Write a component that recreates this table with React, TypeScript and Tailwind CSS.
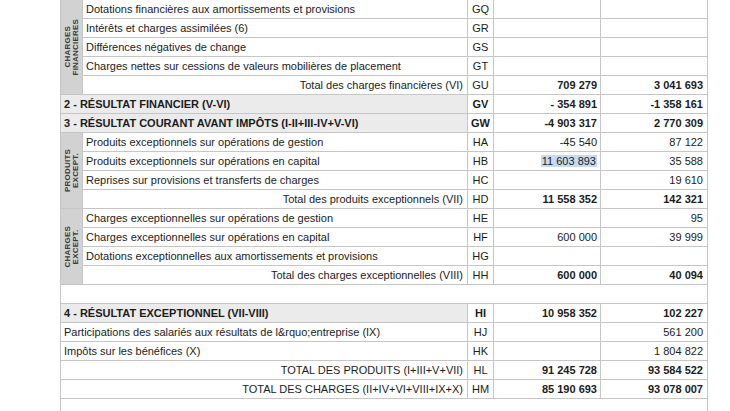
type Row =
  | { kind: "line"; label: string; code: string; v1?: string; v2?: string; total?: boolean; sel?: boolean }
  | { kind: "head"; label: string; code: string; v1?: string; v2?: string }
  | { kind: "plain"; label: string; code: string; v1?: string; v2?: string; total?: boolean };

type Group = { title: [string, string]; rows: Row[] } | { rows: Row[]; title?: undefined };

const groups: Group[] = [
  {
    title: ["CHARGES", "FINANCIERES"],
    rows: [
      { kind: "line", label: "Dotations financières aux amortissements et provisions", code: "GQ" },
      { kind: "line", label: "Intérêts et charges assimilées (6)", code: "GR" },
      { kind: "line", label: "Différences négatives de change", code: "GS" },
      { kind: "line", label: "Charges nettes sur cessions de valeurs mobilières de placement", code: "GT" },
      { kind: "line", label: "Total des charges financières (VI)", code: "GU", v1: "709 279", v2: "3 041 693", total: true },
    ],
  },
  {
    rows: [
      { kind: "head", label: "2 - RÉSULTAT FINANCIER (V-VI)", code: "GV", v1: "- 354 891", v2: "-1 358 161" },
      { kind: "head", label: "3 - RÉSULTAT COURANT AVANT IMPÔTS (I-II+III-IV+V-VI)", code: "GW", v1: "-4 903 317", v2: "2 770 309" },
    ],
  },
  {
    title: ["PRODUITS", "EXCEPT."],
    rows: [
      { kind: "line", label: "Produits exceptionnels sur opérations de gestion", code: "HA", v1: "-45 540", v2: "87 122" },
      { kind: "line", label: "Produits exceptionnels sur opérations en capital", code: "HB", v1: "11 603 893", v2: "35 588", sel: true },
      { kind: "line", label: "Reprises sur provisions et transferts de charges", code: "HC", v2: "19 610" },
      { kind: "line", label: "Total des produits exceptionnels (VII)", code: "HD", v1: "11 558 352", v2: "142 321", total: true },
    ],
  },
  {
    title: ["CHARGES", "EXCEPT."],
    rows: [
      { kind: "line", label: "Charges exceptionnelles sur opérations de gestion", code: "HE", v2: "95" },
      { kind: "line", label: "Charges exceptionnelles sur opérations en capital", code: "HF", v1: "600 000", v2: "39 999" },
      { kind: "line", label: "Dotations exceptionnelles aux amortissements et provisions", code: "HG" },
      { kind: "line", label: "Total des charges exceptionnelles (VIII)", code: "HH", v1: "600 000", v2: "40 094", total: true },
    ],
  },
];

const tail: Row[] = [
  { kind: "head", label: "4 - RÉSULTAT EXCEPTIONNEL (VII-VIII)", code: "HI", v1: "10 958 352", v2: "102 227" },
  { kind: "plain", label: "Participations des salariés aux résultats de l&rquo;entreprise (IX)", code: "HJ", v2: "561 200" },
  { kind: "plain", label: "Impôts sur les bénéfices (X)", code: "HK", v2: "1 804 822" },
  { kind: "plain", label: "TOTAL DES PRODUITS (I+III+V+VII)", code: "HL", v1: "91 245 728", v2: "93 584 522", total: true },
  { kind: "plain", label: "TOTAL DES CHARGES (II+IV+VI+VIII+IX+X)", code: "HM", v1: "85 190 693", v2: "93 078 007", total: true },
];

const cell = "h-[19px] border border-[#c6c6c6] p-0 leading-[18px] whitespace-nowrap";

function Values({ row }: { row: Row }) {
  const bold = row.kind === "head" || ("total" in row && row.total);
  const sel = row.kind === "line" && row.sel;
  return (
    <>
      <td className={`${cell} text-center ${row.kind === "head" ? "font-bold" : ""}`}>{row.code}</td>
      <td className={`${cell} text-right pr-[3px] ${bold ? "font-bold" : ""}`}>
        {sel ? <span className="bg-[#c6daf2] pl-[1px] pr-[1px]">{row.v1}</span> : row.v1}
      </td>
      <td className={`${cell} text-right pr-[4px] ${bold ? "font-bold" : ""}`}>{row.v2}</td>
    </>
  );
}

function Label({ title, span }: { title: [string, string]; span: number }) {
  return (
    <td rowSpan={span} className="border border-[#c6c6c6] bg-[#d2d2d2] p-0 align-middle">
      <div className="flex justify-center">
        <div className="[writing-mode:vertical-rl] rotate-180 text-center text-[8px] font-bold leading-[8px] tracking-[0.2px] text-[#3a3a3a]">
          {title[0]}
          <br />
          {title[1]}
        </div>
      </div>
    </td>
  );
}

function TableRow({ row, title, span }: { row: Row; title?: [string, string]; span?: number }) {
  if (row.kind === "head") {
    return (
      <tr>
        <td colSpan={2} className={`${cell} bg-[#ebebeb] pl-[3px] font-bold`}>{row.label}</td>
        <Values row={row} />
      </tr>
    );
  }
  if (row.kind === "plain") {
    return (
      <tr>
        <td colSpan={2} className={`${cell} ${row.total ? "text-right pr-[4px]" : "pl-[3px]"}`}>{row.label}</td>
        <Values row={row} />
      </tr>
    );
  }
  return (
    <tr>
      {title && span ? <Label title={title} span={span} /> : null}
      <td className={`${cell} ${row.total ? "text-right pr-[4px]" : "pl-[3px]"}`}>{row.label}</td>
      <Values row={row} />
    </tr>
  );
}

export default function App() {
  return (
    <div className="w-[730px] h-[411px] overflow-hidden bg-white font-['Liberation_Sans',Arial,sans-serif] text-[11px] text-[#1c1c1c]">
      <table className="ml-[60px] -mt-[1px] w-[647px] table-fixed border-collapse">
        <colgroup>
          <col className="w-[22px]" />
          <col className="w-[385px]" />
          <col className="w-[26px]" />
          <col className="w-[107px]" />
          <col className="w-[107px]" />
        </colgroup>
        <tbody>
          {groups.map((g, gi) =>
            g.rows.map((r, ri) => (
              <TableRow
                key={`${gi}-${ri}`}
                row={r}
                title={ri === 0 ? g.title : undefined}
                span={g.rows.length}
              />
            ))
          )}
          <tr>
            <td colSpan={5} className="h-[19px] border-x border-[#c6c6c6] p-0" />
          </tr>
          {tail.map((r) => (
            <TableRow key={r.code} row={r} />
          ))}
          <tr>
            <td colSpan={5} className="h-[20px] border-x border-[#c6c6c6] p-0" />
          </tr>
        </tbody>
      </table>
    </div>
  );
}
